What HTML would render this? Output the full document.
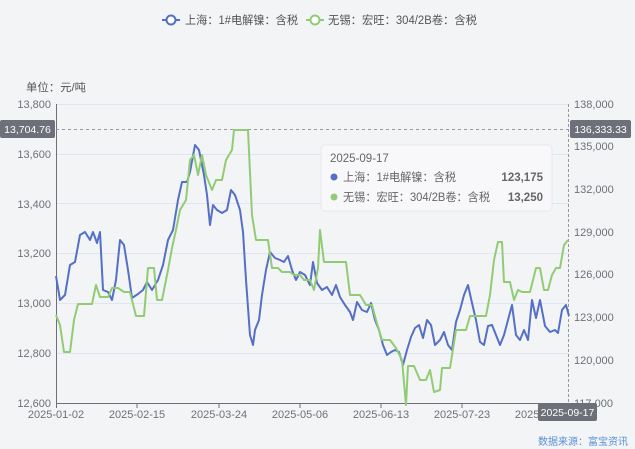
<!DOCTYPE html><html><head><meta charset="utf-8"><style>
body{margin:0;background:#f3f4f6;font-family:"Liberation Sans","Noto Sans CJK SC",sans-serif;}
</style></head><body>
<svg width="635" height="449" xmlns="http://www.w3.org/2000/svg" style="display:block">
<rect width="635" height="449" fill="#f3f4f6"/>
<g font-family="Liberation Sans,Noto Sans CJK SC,sans-serif" font-size="11.5" fill="#555">
<line x1="162" y1="20" x2="180" y2="20" stroke="#5470c6" stroke-width="2"/><circle cx="171" cy="20" r="4.5" fill="#fff" stroke="#5470c6" stroke-width="2"/>
<text x="185" y="24" textLength="113" lengthAdjust="spacingAndGlyphs">上海：1#电解镍：含税</text>
<line x1="306" y1="20" x2="324" y2="20" stroke="#91cc75" stroke-width="2"/><circle cx="315" cy="20" r="4.5" fill="#fff" stroke="#91cc75" stroke-width="2"/>
<text x="328" y="24" textLength="149" lengthAdjust="spacingAndGlyphs">无锡：宏旺：304/2B卷：含税</text>
<text x="26" y="91" font-size="11" textLength="60" lengthAdjust="spacingAndGlyphs">单位：元/吨</text>
</g>
<g stroke="#e0e6f1" stroke-width="1">
<line x1="56" y1="104.5" x2="569" y2="104.5"/><line x1="56" y1="154.5" x2="569" y2="154.5"/><line x1="56" y1="203.5" x2="569" y2="203.5"/><line x1="56" y1="253.5" x2="569" y2="253.5"/><line x1="56" y1="303.5" x2="569" y2="303.5"/><line x1="56" y1="353.5" x2="569" y2="353.5"/>
</g>
<line x1="56.5" y1="104" x2="56.5" y2="403" stroke="#6e7079"/>
<line x1="56" y1="403.5" x2="569" y2="403.5" stroke="#6e7079"/>
<g stroke="#6e7079"><line x1="56.5" y1="403" x2="56.5" y2="408"/><line x1="137" y1="403" x2="137" y2="408"/><line x1="219" y1="403" x2="219" y2="408"/><line x1="300" y1="403" x2="300" y2="408"/><line x1="381" y1="403" x2="381" y2="408"/><line x1="462" y1="403" x2="462" y2="408"/><line x1="543" y1="403" x2="543" y2="408"/></g>
<line x1="56" y1="129.5" x2="569" y2="129.5" stroke="#999" stroke-dasharray="3,3"/>
<line x1="568.5" y1="104" x2="568.5" y2="403" stroke="#999" stroke-dasharray="3,2"/>
<g font-family="Liberation Sans,sans-serif" font-size="11" fill="#6e7079">
<g text-anchor="end"><text x="51" y="108">13,800</text><text x="51" y="158">13,600</text><text x="51" y="208">13,400</text><text x="51" y="257">13,200</text><text x="51" y="307">13,000</text><text x="51" y="357">12,800</text><text x="51" y="407">12,600</text></g>
<text x="574" y="108">138,000</text><text x="574" y="150">135,000</text><text x="574" y="193">132,000</text><text x="574" y="236">129,000</text><text x="574" y="278">126,000</text><text x="574" y="321">123,000</text><text x="574" y="364">120,000</text><text x="574" y="407">117,000</text>
<g text-anchor="middle"><text x="56" y="418">2025-01-02</text><text x="137" y="418">2025-02-15</text><text x="219" y="418">2025-03-24</text><text x="300" y="418">2025-05-06</text><text x="381" y="418">2025-06-13</text><text x="462" y="418">2025-07-23</text><text x="543" y="418">2025-08-29</text></g>
</g>
<polyline fill="none" stroke="#5470c6" stroke-width="2" stroke-linejoin="round" points="56,276 60,300 65,295 70,265 75,262 80,235 85,232 90,240 93,232 97,243 100,232 103,290 108,292 112,300 116,280 120,240 124,245 128,270 132,298 138,294 143,290 147,282 152,290 158,280 163,265 168,240 173,230 178,200 182,182 187,182 190,172 195,145 199,150 204,175 207,195 210,225 213,205 217,210 222,213 227,210 231,190 235,195 240,210 243,232 246,280 250,335 253,345 255,330 259,320 262,295 266,270 270,252 275,258 280,260 284,262 288,256 292,270 296,280 300,272 305,275 310,285 313,262 317,283 322,290 327,287 332,295 336,285 340,297 345,305 350,312 353,320 357,302 362,310 367,312 371,303 375,320 379,330 383,345 387,355 391,352 395,350 399,352 403,365 407,350 411,337 415,328 419,325 423,338 427,320 431,325 435,345 440,340 444,332 448,345 452,350 456,322 460,310 464,295 468,285 472,303 476,320 480,342 484,345 488,326 492,325 496,335 500,345 504,335 508,320 512,305 516,335 520,340 524,330 528,340 532,300 536,318 540,300 545,326 550,332 555,330 558,333 562,310 566,305 569,316"/>
<polyline fill="none" stroke="#91cc75" stroke-width="2" stroke-linejoin="round" points="56,315 60,325 64,352 70,352 74,320 78,304 84,304 92,304 96,285 100,297 108,297 112,288 118,288 124,292 130,292 136,316 144,316 148,268 154,268 157,300 162,300 168,270 172,248 176,230 180,210 186,200 190,160 194,155 198,175 202,155 206,175 212,190 216,180 222,180 226,160 232,150 234,130 248,130 252,215 256,240 268,240 272,268 278,268 282,272 290,272 294,275 300,275 304,280 310,280 314,290 318,268 320,230 324,262 330,262 346,262 350,295 360,295 366,305 372,305 376,320 382,340 390,340 396,348 402,360 406,405 408,366 414,366 420,380 426,380 430,370 434,392 440,390 442,368 450,368 456,330 466,330 470,316 486,316 490,295 494,260 498,242 502,242 504,282 510,282 514,300 518,290 522,292 530,292 536,268 540,268 544,290 548,290 552,275 556,268 560,268 564,245 568,240"/>
<rect x="0" y="120" width="55" height="18" rx="2" fill="#6e7079"/><text x="27.5" y="133" text-anchor="middle" font-family="Liberation Sans,sans-serif" font-size="10.5" fill="#fff">13,704.76</text>
<rect x="570" y="120" width="61" height="18" rx="2" fill="#6e7079"/><text x="600.5" y="133" text-anchor="middle" font-family="Liberation Sans,sans-serif" font-size="10.5" fill="#fff">136,333.33</text>
<rect x="538" y="403" width="59" height="18" rx="2" fill="#6e7079"/><text x="567.5" y="416" text-anchor="middle" font-family="Liberation Sans,sans-serif" font-size="10.5" fill="#fff">2025-09-17</text>
<rect x="321" y="145" width="231" height="66" rx="4" fill="#f8f8fa" fill-opacity="0.95" stroke="#e8e8ee"/>
<g font-family="Liberation Sans,Noto Sans CJK SC,sans-serif" font-size="11.5" fill="#666">
<text x="330" y="162">2025-09-17</text>
<circle cx="334" cy="177" r="3.5" fill="#5470c6"/><text x="343" y="181" textLength="113" lengthAdjust="spacingAndGlyphs">上海：1#电解镍：含税</text>
<circle cx="334" cy="197" r="3.5" fill="#91cc75"/><text x="343" y="201" textLength="147" lengthAdjust="spacingAndGlyphs">无锡：宏旺：304/2B卷：含税</text>
<text x="543" y="181" text-anchor="end" font-weight="bold">123,175</text>
<text x="543" y="201" text-anchor="end" font-weight="bold">13,250</text>
</g>
<text x="628" y="445" text-anchor="end" font-family="Liberation Sans,Noto Sans CJK SC,sans-serif" font-size="10" fill="#5b8fd6">数据来源：富宝资讯</text>
</svg>
</body></html>
